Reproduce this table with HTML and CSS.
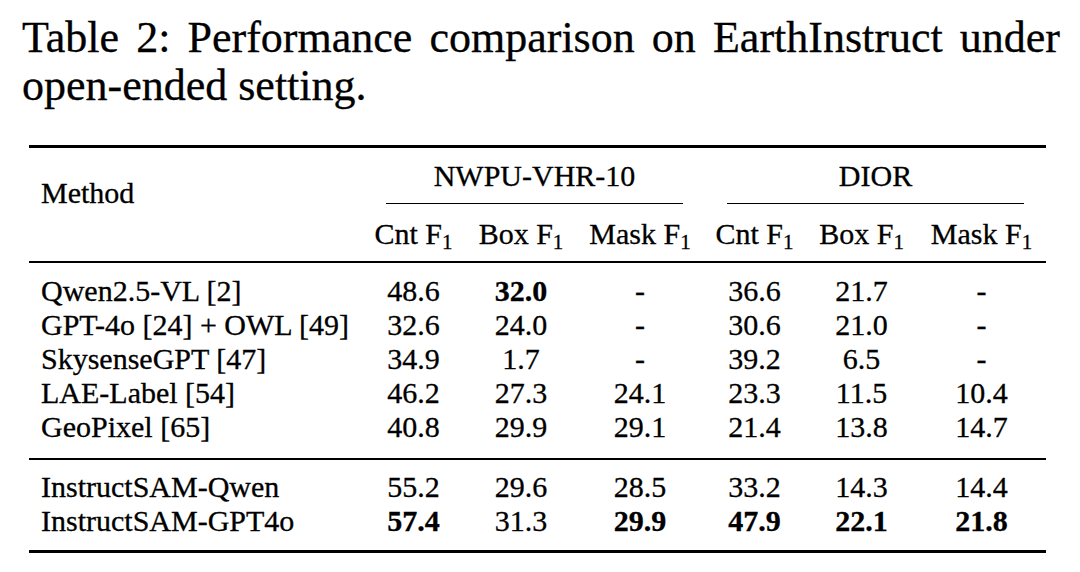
FILE: index.html
```html
<!DOCTYPE html>
<html lang="en">
<head>
<meta charset="utf-8">
<title>Table 2</title>
<link rel="stylesheet" href="styles.css">
</head>
<body>
<div class="page">
  <p class="caption">Table 2: Performance comparison on EarthInstruct under open-ended setting.</p>
  <table class="results">
    <colgroup>
      <col class="c-method">
      <col class="c-n1"><col class="c-n2"><col class="c-n3">
      <col class="c-d1"><col class="c-d2"><col class="c-d3">
    </colgroup>
    <thead>
      <tr class="group-row">
        <th class="method-head" rowspan="2">Method</th>
        <th colspan="3" class="group"><div class="cmid cmid-nwpu">NWPU-VHR-10</div></th>
        <th colspan="3" class="group"><div class="cmid cmid-dior">DIOR</div></th>
      </tr>
      <tr class="sub-row">
        <th>Cnt F<span class="sub">1</span></th>
        <th>Box F<span class="sub">1</span></th>
        <th>Mask F<span class="sub">1</span></th>
        <th>Cnt F<span class="sub">1</span></th>
        <th>Box F<span class="sub">1</span></th>
        <th>Mask F<span class="sub">1</span></th>
      </tr>
    </thead>
    <tbody class="baselines">
      <tr class="first"><td>Qwen2.5-VL [2]</td><td>48.6</td><td><b>32.0</b></td><td>-</td><td>36.6</td><td>21.7</td><td>-</td></tr>
      <tr><td>GPT-4o [24] + OWL [49]</td><td>32.6</td><td>24.0</td><td>-</td><td>30.6</td><td>21.0</td><td>-</td></tr>
      <tr><td>SkysenseGPT [47]</td><td>34.9</td><td>1.7</td><td>-</td><td>39.2</td><td>6.5</td><td>-</td></tr>
      <tr><td>LAE-Label [54]</td><td>46.2</td><td>27.3</td><td>24.1</td><td>23.3</td><td>11.5</td><td>10.4</td></tr>
      <tr class="last"><td>GeoPixel [65]</td><td>40.8</td><td>29.9</td><td>29.1</td><td>21.4</td><td>13.8</td><td>14.7</td></tr>
    </tbody>
    <tbody class="ours">
      <tr class="first"><td>InstructSAM-Qwen</td><td>55.2</td><td>29.6</td><td>28.5</td><td>33.2</td><td>14.3</td><td>14.4</td></tr>
      <tr class="last"><td>InstructSAM-GPT4o</td><td><b>57.4</b></td><td>31.3</td><td><b>29.9</b></td><td><b>47.9</b></td><td><b>22.1</b></td><td><b>21.8</b></td></tr>
    </tbody>
  </table>
</div>
</body>
</html>
```
FILE: styles.css
```css
html, body {
  margin: 0;
  padding: 0;
  background: #ffffff;
}

body {
  font-family: "Liberation Serif", Tinos, "Times New Roman", "DejaVu Serif", serif;
  color: #000000;
  -webkit-text-stroke: 0.3px #000000;
}

.page {
  width: 1080px;
  height: 572px;
  overflow: hidden;
}

.caption {
  margin: 0;
  padding: 14px 0 0 22px;
  width: 1038px;
  font-size: 44px;
  line-height: 48px;
  text-align: justify;
}

.results {
  margin: 35px 0 0 29px;
  width: 1017px;
  table-layout: fixed;
  border-collapse: collapse;
  border-top: 3px solid #000;
  border-bottom: 3px solid #000;
  font-size: 30px;
  line-height: 34px;
}

.c-method { width: 333px; }
.c-n1 { width: 103px; }
.c-n2 { width: 112px; }
.c-n3 { width: 126px; }
.c-d1 { width: 103px; }
.c-d2 { width: 111px; }
.c-d3 { width: 129px; }

.results th,
.results td {
  padding: 0;
  font-weight: normal;
  text-align: center;
  white-space: nowrap;
  vertical-align: top;
}

.results th.method-head,
.results td:first-child {
  text-align: left;
  padding-left: 12px;
}

.results th.method-head {
  padding-top: 28px;
}

.group-row th.group {
  padding-top: 11px;
}

.cmid {
  padding-bottom: 10px;
  border-bottom: 1px solid #000;
}

.cmid-nwpu {
  margin: 0 20px 0 24px;
}

.cmid-dior {
  margin: 0 22px 0 24px;
}

.sub-row th {
  padding-top: 13px;
  padding-bottom: 10px;
}

thead {
  border-bottom: 2px solid #000;
}

.sub {
  font-size: 21px;
  line-height: 0;
  vertical-align: -5px;
}

.baselines {
  border-bottom: 2px solid #000;
}

tbody tr.first td {
  padding-top: 11px;
}

tbody tr.last td {
  padding-bottom: 14px;
}

.ours tr.first td {
  padding-top: 10px;
}

.ours tr.last td {
  padding-bottom: 12px;
}

b {
  font-weight: bold;
}
```
